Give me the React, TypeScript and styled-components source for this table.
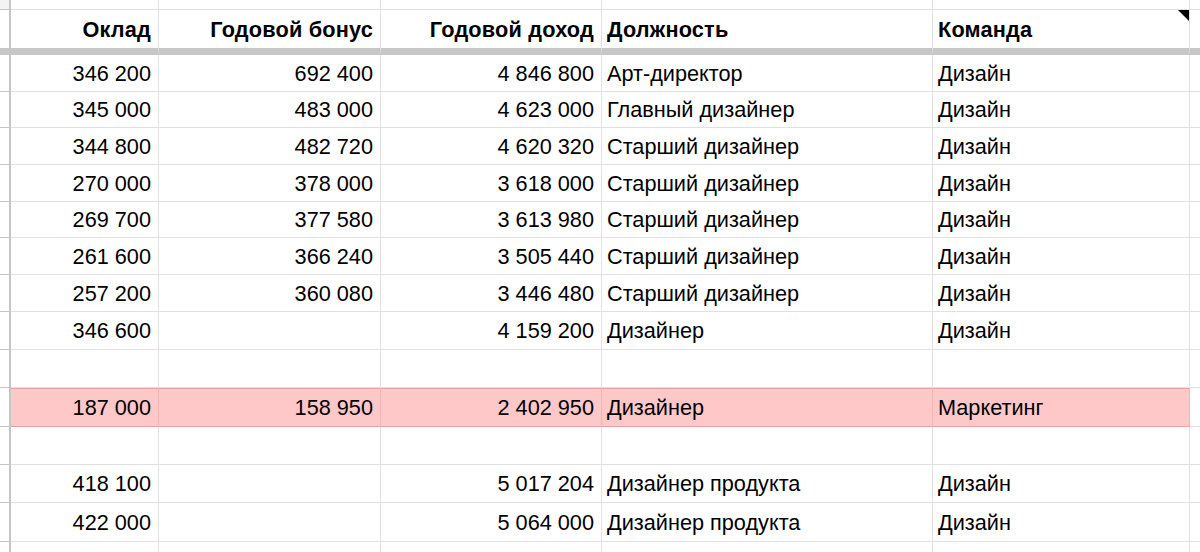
import React from "react";
import styled, { createGlobalStyle, css } from "styled-components";

const Global = createGlobalStyle`
  html, body { margin: 0; padding: 0; background: #fff; }
  body { font-family: "Liberation Sans", Arial, Helvetica, sans-serif; overflow: hidden; }
  * { box-sizing: border-box; }
`;

const Sheet = styled.div`
  display: grid;
  grid-template-columns: 11px 148px 222px 221px 331px 257px 1fr;
  width: 1200px;
  height: 552px;
  overflow: hidden;
  color: #000;
`;

type CellProps = { $align?: "left" | "right"; $h: number; $pink?: boolean; $head?: boolean };

const Cell = styled.div<CellProps>`
  height: ${(p) => p.$h}px;
  display: flex;
  align-items: center;
  justify-content: ${(p) => (p.$align === "right" ? "flex-end" : "flex-start")};
  padding: ${(p) => (p.$align === "right" ? "1px 7px 0 0" : "1px 0 0 5px")};
  font-size: 21.7px;
  white-space: nowrap;
  position: relative;
  border-right: 1px solid #e1e1e1;
  border-bottom: 1px solid #e1e1e1;
  ${(p) =>
    p.$head &&
    css`
      font-weight: 700;
      letter-spacing: 0.2px;
      border-bottom: 7px solid #c7c7c7;
    `}
  ${(p) =>
    p.$pink &&
    css`
      background: #ffc8c8;
      border-right-color: #efb4b4;
      border-bottom-color: #e6a3a3;
      box-shadow: inset 0 1px 0 #e6a3a3;
    `}
`;

const RowHead = styled.div<{ $h: number; $head?: boolean; $corner?: boolean }>`
  height: ${(p) => p.$h}px;
  border-right: 2px solid #c4c6c8;
  border-bottom: ${(p) => (p.$head ? "7px solid #c7c7c7" : "1px solid #c4c6c8")};
  background: ${(p) => (p.$corner ? "#f3f3f3" : "#fff")};
`;

const Edge = styled.div<{ $h: number; $head?: boolean }>`
  height: ${(p) => p.$h}px;
  border-bottom: ${(p) => (p.$head ? "7px solid #c7c7c7" : "1px solid #e1e1e1")};
`;

const Corner = styled.span`
  position: absolute;
  top: 0;
  right: 0;
  width: 0;
  height: 0;
  border-top: 11px solid #000;
  border-left: 11px solid transparent;
`;

type Row = { h: number; a?: string; b?: string; c?: string; d?: string; e?: string; pink?: boolean };

const rows: Row[] = [
  { h: 37, a: "346 200", b: "692 400", c: "4 846 800", d: "Арт-директор", e: "Дизайн" },
  { h: 36, a: "345 000", b: "483 000", c: "4 623 000", d: "Главный дизайнер", e: "Дизайн" },
  { h: 37, a: "344 800", b: "482 720", c: "4 620 320", d: "Старший дизайнер", e: "Дизайн" },
  { h: 37, a: "270 000", b: "378 000", c: "3 618 000", d: "Старший дизайнер", e: "Дизайн" },
  { h: 36, a: "269 700", b: "377 580", c: "3 613 980", d: "Старший дизайнер", e: "Дизайн" },
  { h: 37, a: "261 600", b: "366 240", c: "3 505 440", d: "Старший дизайнер", e: "Дизайн" },
  { h: 37, a: "257 200", b: "360 080", c: "3 446 480", d: "Старший дизайнер", e: "Дизайн" },
  { h: 38, a: "346 600", b: "", c: "4 159 200", d: "Дизайнер", e: "Дизайн" },
  { h: 38 },
  { h: 39, a: "187 000", b: "158 950", c: "2 402 950", d: "Дизайнер", e: "Маркетинг", pink: true },
  { h: 38 },
  { h: 38, a: "418 100", b: "", c: "5 017 204", d: "Дизайнер продукта", e: "Дизайн" },
  { h: 39, a: "422 000", b: "", c: "5 064 000", d: "Дизайнер продукта", e: "Дизайн" },
  { h: 38 },
];

export default function App() {
  return (
    <>
      <Global />
      <Sheet>
        <RowHead $h={10} $corner />
        <Cell $h={10} />
        <Cell $h={10} />
        <Cell $h={10} />
        <Cell $h={10} />
        <Cell $h={10} />
        <Edge $h={10} />

        <RowHead $h={45} $head />
        <Cell $h={45} $head $align="right">Оклад</Cell>
        <Cell $h={45} $head $align="right">Годовой бонус</Cell>
        <Cell $h={45} $head $align="right">Годовой доход</Cell>
        <Cell $h={45} $head>Должность</Cell>
        <Cell $h={45} $head>
          Команда
          <Corner />
        </Cell>
        <Edge $h={45} $head />

        {rows.map((r, i) => (
          <React.Fragment key={i}>
            <RowHead $h={r.h} />
            <Cell $h={r.h} $align="right" $pink={r.pink}>{r.a}</Cell>
            <Cell $h={r.h} $align="right" $pink={r.pink}>{r.b}</Cell>
            <Cell $h={r.h} $align="right" $pink={r.pink}>{r.c}</Cell>
            <Cell $h={r.h} $pink={r.pink}>{r.d}</Cell>
            <Cell $h={r.h} $pink={r.pink}>{r.e}</Cell>
            <Edge $h={r.h} />
          </React.Fragment>
        ))}
      </Sheet>
    </>
  );
}
